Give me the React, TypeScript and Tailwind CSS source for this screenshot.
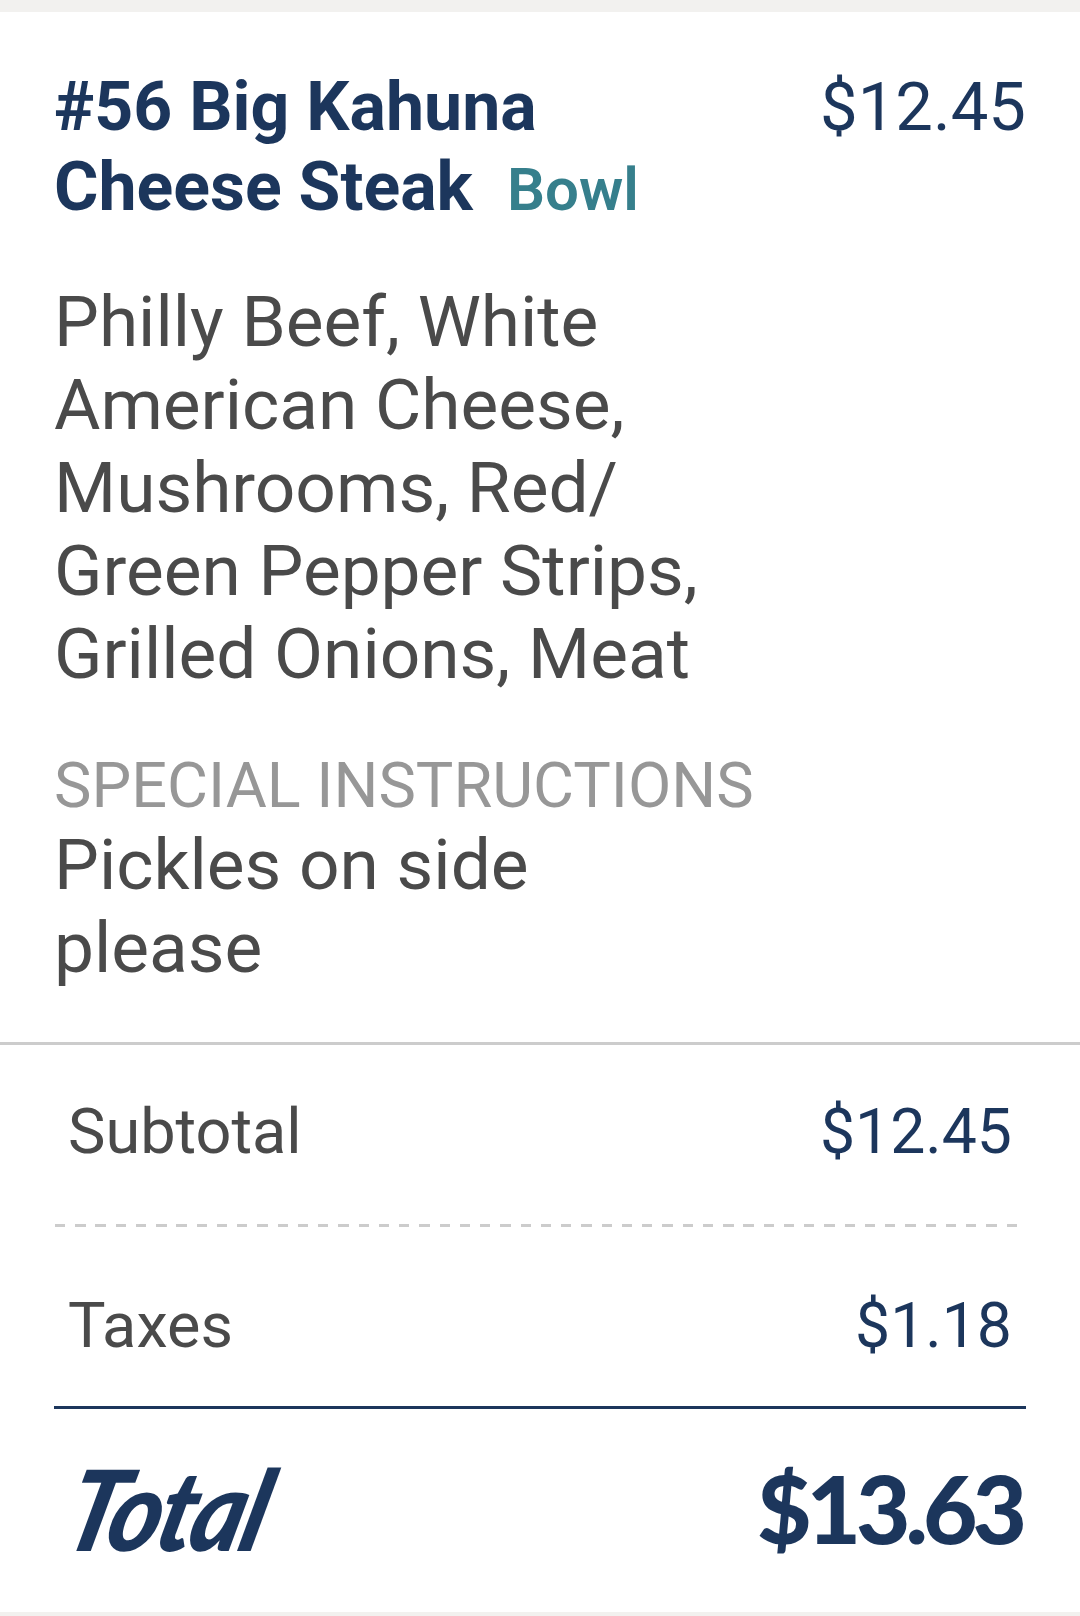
import React from 'react';

const roboto = "font-['Roboto',sans-serif]";

function SummaryRow({ label, value }: { label: string; value: string }) {
  return (
    <div className="flex items-center justify-between pl-[68px] pr-[68px] text-[63px] leading-[72px]">
      <span className="text-[#4a4a4a]">{label}</span>
      <span className="text-[62.5px] text-[#1c365c]">{value}</span>
    </div>
  );
}

export default function App() {
  return (
    <div className={`h-[1616px] w-[1080px] overflow-hidden bg-[#f2f1ef] pt-3 pb-1 ${roboto}`}>
      <div className="h-[1600px] bg-white">
        <div className="px-[54px] pt-[55px]">
          <div className="flex items-start justify-between">
            <h1 className="w-[640px] text-[68px] font-bold leading-[80px] text-[#1c365c]">
              #56 Big Kahuna
              <br />
              Cheese Steak
              <span className="ml-[34px] text-[60px] font-semibold text-[#367f8c]">Bowl</span>
            </h1>
            <span className="text-[67px] leading-[80px] text-[#1c365c]">$12.45</span>
          </div>

          <p className="mt-[50px] text-[71.2px] leading-[83px] text-[#4a4a4a]">
            Philly Beef, White
            <br />
            American Cheese,
            <br />
            Mushrooms, Red/
            <br />
            Green Pepper Strips,
            <br />
            Grilled Onions, Meat
          </p>

          <div className="mt-[54px] text-[63px] leading-[74px] text-[#979797]">SPECIAL INSTRUCTIONS</div>
          <p className="text-[71.2px] leading-[83px] text-[#4a4a4a]">
            Pickles on side
            <br />
            please
          </p>
        </div>

        <div className="mt-[53px] h-[3px] bg-[#cccccc]" />

        <div className="pt-[51px]">
          <SummaryRow label="Subtotal" value="$12.45" />
        </div>
        <div className="ml-[55px] mr-[62px] mt-[56px] h-[3px] bg-[repeating-linear-gradient(90deg,#cccccc_0,#cccccc_10.25px,transparent_10.25px,transparent_20.25px)]" />
        <div className="pt-[63px]">
          <SummaryRow label="Taxes" value="$1.18" />
        </div>
        <div className="mx-[54px] mt-[44px] h-[3px] bg-[#1c365c]" />

        <div className="flex items-center justify-between pl-[70px] pr-[58px] pt-[34px]">
          <span className="origin-left -skew-x-[16deg] scale-x-[0.9] font-['Lato',sans-serif] text-[112px] font-black italic leading-[130px] tracking-[-3px] text-[#1c365c]">
            Total
          </span>
          <span className="font-['Lato',sans-serif] text-[94px] font-black leading-[130px] tracking-[-5px] text-[#1c365c]">$13.63</span>
        </div>
      </div>
    </div>
  );
}
